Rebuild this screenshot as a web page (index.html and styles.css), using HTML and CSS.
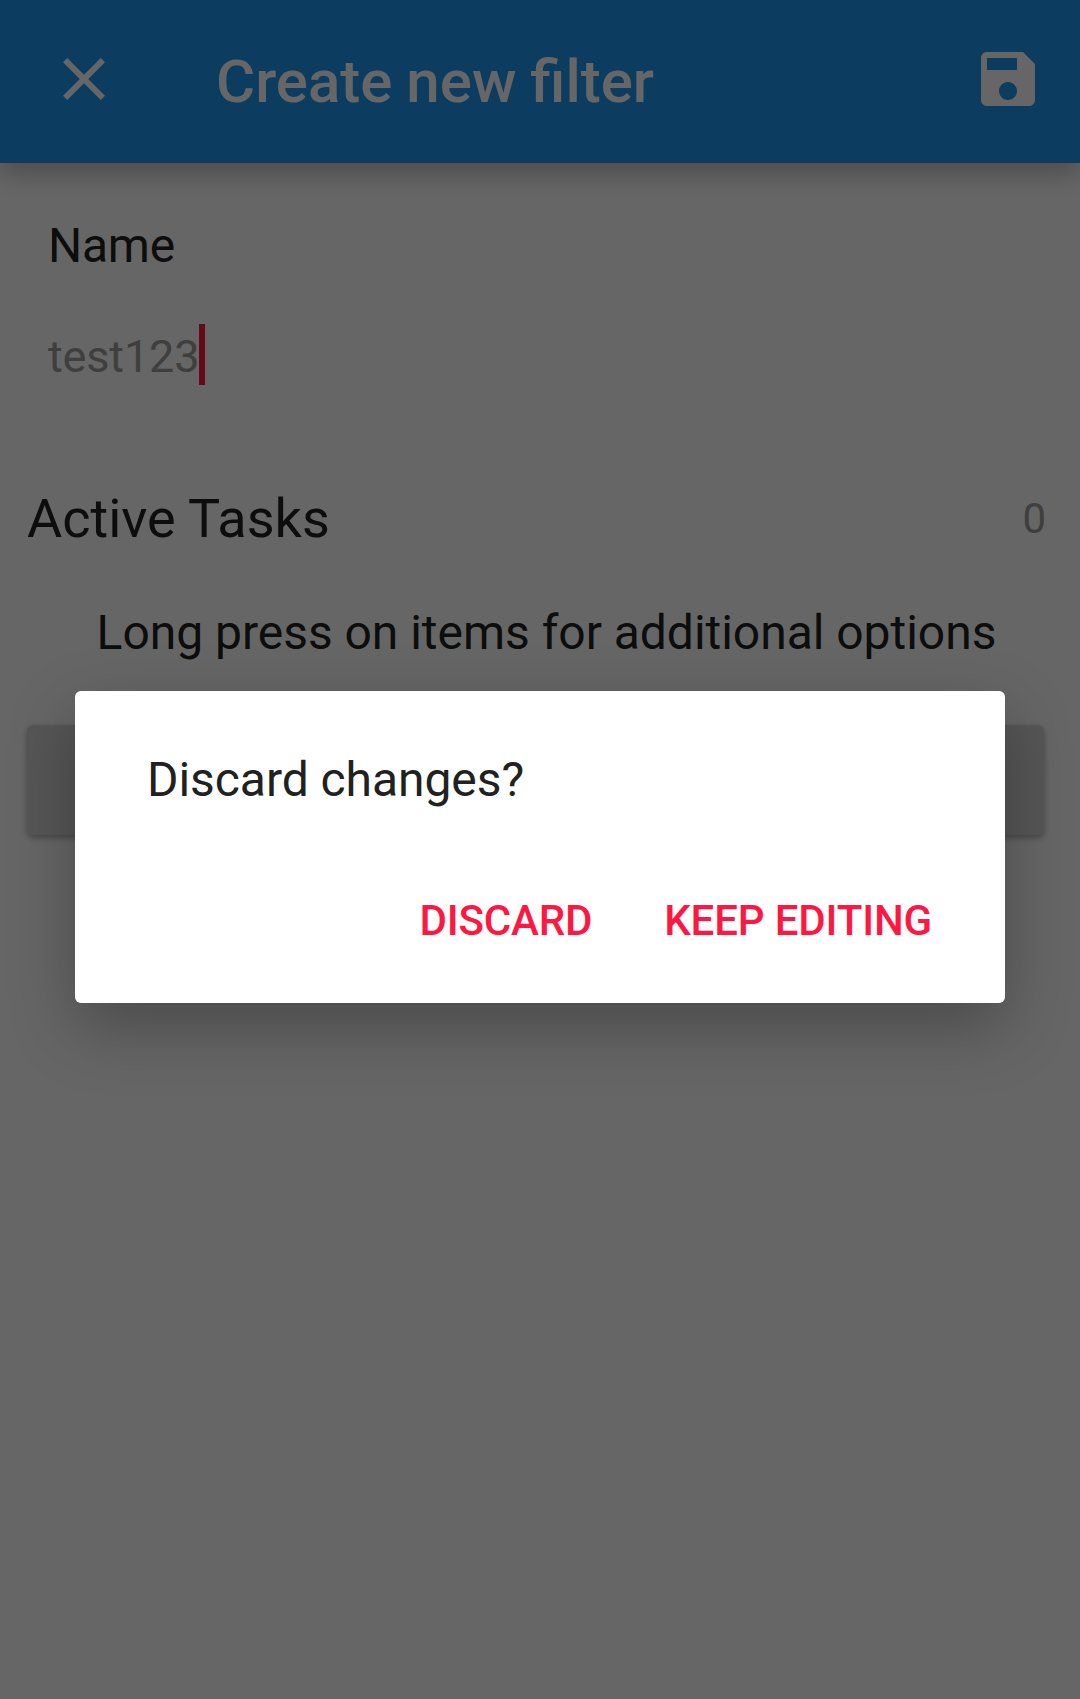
FILE: index.html
```html
<!DOCTYPE html>
<html lang="en">
<head>
<meta charset="utf-8">
<title>Create new filter</title>
<link rel="stylesheet" href="styles.css">
</head>
<body>
<div class="screen">
  <header class="toolbar">
    <svg class="icon" viewBox="0 0 24 24"><path d="M19 6.41L17.59 5 12 10.59 6.41 5 5 6.41 10.59 12 5 17.59 6.41 19 12 13.41 17.59 19 19 17.59 13.41 12z"/></svg>
    <h1 class="toolbar-title">Create new filter</h1>
    <svg class="icon" viewBox="0 0 24 24"><path d="M17 3H5c-1.11 0-2 .9-2 2v14c0 1.1.89 2 2 2h14c1.1 0 2-.9 2-2V7l-4-4zm-5 16c-1.66 0-3-1.34-3-3s1.34-3 3-3 3 1.34 3 3-1.34 3-3 3zm3-10H5V5h10v4z"/></svg>
  </header>
  <main class="content">
    <div class="label">Name</div>
    <div class="field"><span class="field-text">test123</span><span class="caret"></span></div>
    <div class="row">
      <span class="row-title">Active Tasks</span>
      <span class="row-count">0</span>
    </div>
    <p class="hint">Long press on items for additional options</p>
    <div class="raised-button"></div>
  </main>
</div>
<div class="scrim">
  <div class="dialog">
    <p class="dialog-message">Discard changes?</p>
    <div class="dialog-actions">
      <span class="action">DISCARD</span>
      <span class="action">KEEP EDITING</span>
    </div>
  </div>
</div>
</body>
</html>
```
FILE: styles.css
```css
* { box-sizing: border-box; }
body { margin: 0; font-family: Roboto, sans-serif; color: #212121; }
h1, p { margin: 0; font-weight: 400; }

.screen { height: 1699px; overflow: hidden; background: #fff; }

.toolbar {
  display: flex;
  align-items: center;
  height: 163px;
  padding: 0 36px 0 48px;
  background: #1e96f0;
  color: #fff;
  box-shadow: 0 11px 24px rgba(0, 0, 0, .25);
}
.icon { flex: none; width: 72px; height: 72px; margin-bottom: 5px; fill: currentColor; }
.toolbar-title { flex: 1; padding-left: 96px; font-size: 60px; line-height: 60px; font-weight: 500; word-spacing: -1px; }

.content { padding: 53px 36px 0 27px; }
.label { padding-left: 21px; font-size: 48px; line-height: 60px; letter-spacing: -.25px; }
.field { display: flex; height: 61px; margin: 48px 0 0 21px; }
.field-text { padding-top: 2px; font-size: 45px; line-height: 61px; letter-spacing: -.15px; color: #9e9e9e; }
.caret { width: 6px; background: #ff1744; }

.row { display: flex; align-items: center; justify-content: space-between; height: 64px; margin: 102px -2px 0 0; }
.row-title { font-size: 54px; line-height: 64px; }
.row-count { padding-bottom: 1px; font-size: 42px; line-height: 62px; color: #9e9e9e; }
.hint { margin-top: 54px; padding-left: 22px; font-size: 48px; line-height: 56px; letter-spacing: -.03px; text-align: center; }
.raised-button {
  height: 110px;
  margin-top: 64px;
  border-radius: 6px;
  background: #d6d7d7;
  box-shadow: 0 3px 6px rgba(0, 0, 0, .3);
}

.scrim {
  position: absolute;
  inset: 0;
  height: 1699px;
  padding: 691px 75px 0;
  overflow: hidden;
  background: rgba(0, 0, 0, .6);
}
.dialog {
  height: 312px;
  padding: 61px 72px 0;
  border-radius: 6px;
  background: #fff;
  box-shadow: 0 24px 66px rgba(0, 0, 0, .28);
}
.dialog-message { font-size: 48px; line-height: 56px; letter-spacing: -.06px; }
.dialog-actions { display: flex; justify-content: flex-end; gap: 72px; margin: 88px 1px 0 0; }
.action { font-size: 42px; line-height: 50px; font-weight: 500; letter-spacing: -.15px; color: #ff1744; }
```
